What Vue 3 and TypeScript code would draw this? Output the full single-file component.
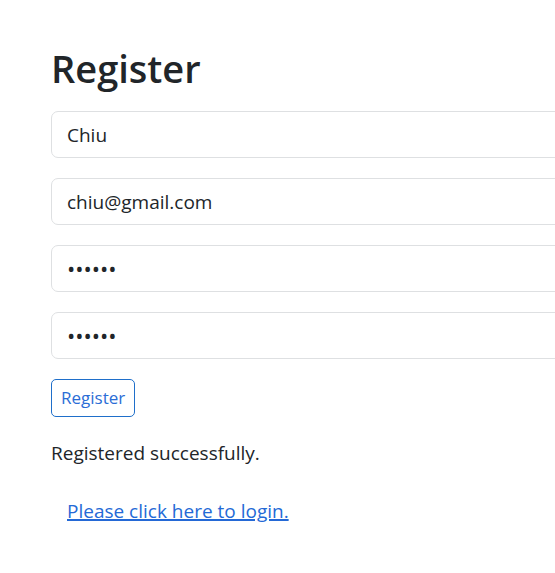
<script setup lang="ts">
import { ref } from 'vue'

const name = ref('Chiu')
const email = ref('chiu@gmail.com')
const password = ref('secret')
const confirmation = ref('secret')
const message = ref('Registered successfully.')

function register(): void {
  message.value = 'Registered successfully.'
}
</script>

<template>
  <main class="page">
    <h1 class="title">Register</h1>
    <form class="form" @submit.prevent="register">
      <input v-model="name" class="field" type="text" aria-label="Name" />
      <input v-model="email" class="field" type="email" aria-label="Email" />
      <input v-model="password" class="field secret" type="password" aria-label="Password" />
      <input v-model="confirmation" class="field secret" type="password" aria-label="Confirm password" />
      <button class="submit" type="submit">Register</button>
    </form>
    <p class="message">{{ message }}</p>
    <a class="login" href="#login">Please click here to login.</a>
  </main>
</template>

<style>
body {
  background: #fff;
  overflow-x: hidden;
}
</style>

<style scoped>
.page {
  box-sizing: border-box;
  padding: 44px 0 44px 51px;
  color: #212529;
  font-family: "Segoe UI", "Open Sans", "Noto Sans", sans-serif;
  font-size: 19px;
  line-height: 30px;
}

.title {
  margin: 0 0 19px;
  font-size: 38px;
  font-weight: 600;
  line-height: 48px;
}

.form {
  display: flex;
  flex-direction: column;
  align-items: flex-start;
  gap: 20px;
}

.field {
  box-sizing: border-box;
  width: calc(100% + 16px);
  height: 47px;
  padding: 7px 15px;
  border: 1px solid #dee0e2;
  border-radius: 7px;
  background: #fff;
  color: inherit;
  font: inherit;
}

.secret {
  padding: 6px 15px 8px;
  font-size: 22px;
}

.submit {
  height: 38px;
  padding: 0 9px;
  border: 1px solid #1f6fca;
  border-radius: 5px;
  background: transparent;
  color: #2a6dd6;
  font: inherit;
  font-size: 17px;
}

.message {
  margin: 21px 0 28px;
}

.login {
  display: inline-block;
  padding: 0 16px;
  color: #2469d6;
  text-decoration-thickness: 2px;
}
</style>
